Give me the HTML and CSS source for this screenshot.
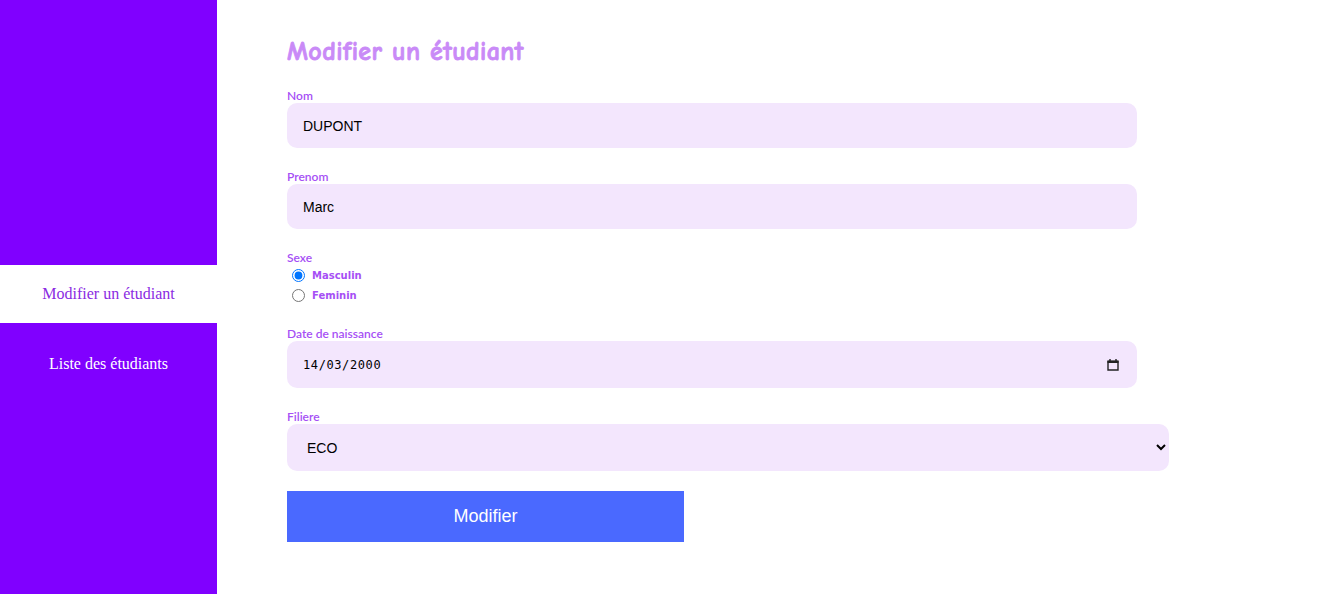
FILE: index.html
```html
<!DOCTYPE html>
<html lang="fr">
<head>
<meta charset="utf-8">
<title>Modifier un étudiant</title>
<link rel="stylesheet" href="styles.css">
</head>
<body>
<aside class="sidebar">
  <nav class="nav">
    <a class="nav-item active" href="#">Modifier un étudiant</a>
    <a class="nav-item" href="#">Liste des étudiants</a>
  </nav>
</aside>
<main class="main">
  <h1 class="title">Modifier un étudiant</h1>
  <form class="form">
    <div class="group">
      <label class="label" for="nom">Nom</label>
      <input class="field" id="nom" type="text" value="DUPONT">
    </div>
    <div class="group">
      <label class="label" for="prenom">Prenom</label>
      <input class="field" id="prenom" type="text" value="Marc">
    </div>
    <div class="group">
      <span class="label">Sexe</span>
      <label class="radio"><input type="radio" name="sexe" checked> <span>Masculin</span></label>
      <label class="radio"><input type="radio" name="sexe"> <span>Feminin</span></label>
    </div>
    <div class="group">
      <label class="label" for="date">Date de naissance</label>
      <div class="field date" id="date">
        <span class="date-text">14/03/2000</span>
        <svg class="cal" width="12" height="13" viewBox="0 0 12 13" aria-hidden="true">
          <path d="M1 3.5h10v8.5H1z" fill="none" stroke="#222" stroke-width="1.4"/>
          <path d="M0.5 2.5h11v2.5H0.5z" fill="#222"/>
          <path d="M3 1v2M9 1v2" stroke="#222" stroke-width="1.4"/>
        </svg>
      </div>
    </div>
    <div class="group last">
      <label class="label" for="filiere">Filiere</label>
      <select class="field select" id="filiere">
        <option>ECO</option>
        <option>INFO</option>
      </select>
    </div>
    <button class="btn" type="button">Modifier</button>
  </form>
</main>
</body>
</html>
```
FILE: styles.css
```css
* { box-sizing: border-box; }
html, body { margin: 0; height: 100%; }
body {
  display: flex;
  background: #fff;
  font-family: "Liberation Serif", serif;
}
.sidebar {
  width: 217px;
  flex: none;
  min-height: 594px;
  background: #8000ff;
}
.nav {
  display: flex;
  flex-direction: column;
  padding-top: 265px;
  gap: 12px;
}
.nav-item {
  display: flex;
  align-items: center;
  justify-content: center;
  height: 58px;
  font-size: 16px;
  color: #fff;
  text-decoration: none;
}
.nav-item.active {
  background: #fff;
  color: #8a2be2;
}
.main {
  flex: 1;
  padding: 36px 0 0 70px;
}
.title {
  margin: 0 0 21px;
  font-family: "Comic Neue", "Comic Sans MS", "DejaVu Sans", sans-serif;
  font-weight: 700;
  font-size: 26px;
  line-height: 32px;
  color: #c98af7;
  letter-spacing: 0.4px;
  -webkit-text-stroke: 0.8px #c98af7;
}
.form { display: flex; flex-direction: column; align-items: flex-start; }
.group {
  display: flex;
  flex-direction: column;
  margin-bottom: 22px;
}
.group.last { margin-bottom: 20px; }
.label {
  font-family: Lato, "Open Sans", sans-serif;
  font-weight: 600;
  font-size: 12px;
  line-height: 14px;
  color: #a64ff5;
}
.field {
  width: 850px;
  height: 45px;
  border: none;
  border-radius: 10px;
  background: #f3e6fd;
  padding: 0 16px;
  font-family: "Liberation Sans", Arial, sans-serif;
  font-size: 14px;
  color: #000;
  outline: none;
}
.field.date {
  display: flex;
  align-items: center;
  justify-content: space-between;
  height: 47px;
  padding: 0 18px 0 16px;
  font-family: "DejaVu Sans Mono", monospace;
  font-size: 12px;
  letter-spacing: 0.6px;
}
.cal { display: block; }
.field.select {
  width: 882px;
  height: 47px;
  padding: 0 16px;
}
.radio {
  display: flex;
  align-items: center;
  height: 20px;
  font-family: "DejaVu Sans", sans-serif;
  font-weight: bold;
  font-size: 10px;
  color: #a64ff5;
}
.radio input { margin: 0 7px 0 5px; width: 13px; height: 13px; }
.btn {
  width: 397px;
  height: 51px;
  border: none;
  background: #4a69ff;
  color: #fff;
  font-family: "Liberation Sans", Arial, sans-serif;
  font-size: 18px;
  cursor: pointer;
}
```
